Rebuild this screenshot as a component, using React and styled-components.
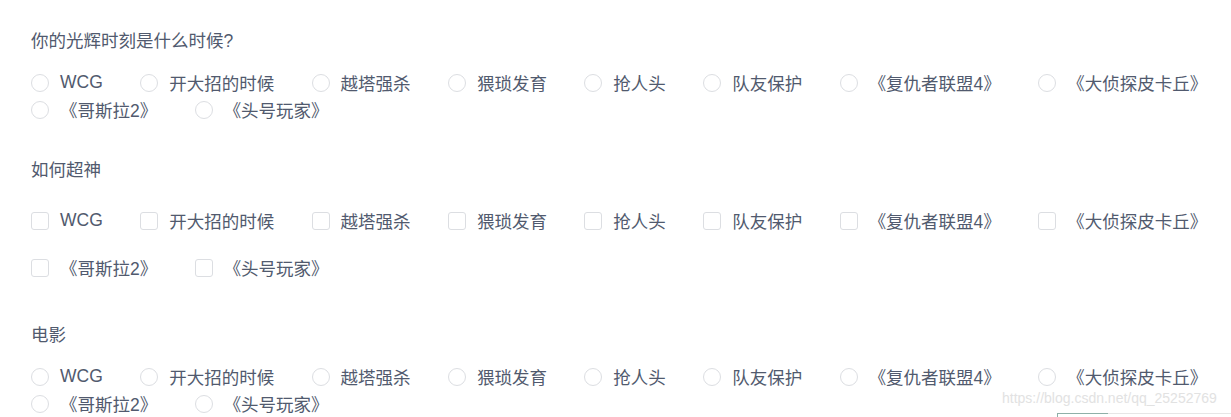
import React from 'react'
import styled, { createGlobalStyle } from 'styled-components'

const GlobalStyle = createGlobalStyle`
  html, body {
    margin: 0;
    padding: 0;
    background: #fff;
  }
  body {
    font-family: "Liberation Sans", "Noto Sans CJK SC", sans-serif;
    color: #515a6e;
  }
`

const Page = styled.div`
  position: relative;
  width: 1231px;
  height: 417px;
  overflow: hidden;
  box-sizing: border-box;
  padding: 31px 0 0 31px;
`

const Section = styled.div`
  margin-bottom: ${(p) => p.$after}px;
`

const Title = styled.div`
  font-size: 17.5px;
  line-height: 20px;
  height: 20px;
  margin-bottom: ${(p) => p.$gap}px;
  color: #515a6e;
`

const Group = styled.div`
  display: flex;
  flex-wrap: wrap;
  column-gap: 37.4px;
  row-gap: ${(p) => p.$rowGap}px;
`

const Option = styled.label`
  display: flex;
  align-items: center;
  height: 27px;
  font-size: 17.5px;
  color: #515a6e;
  white-space: nowrap;
  cursor: pointer;
`

const Mark = styled.span`
  display: inline-block;
  width: 18px;
  height: 18px;
  box-sizing: border-box;
  border: 1px solid #dcdee2;
  border-radius: ${(p) => (p.$square ? '3px' : '50%')};
  background: #fff;
  margin-right: 11px;
  flex: none;
`

const Watermark = styled.div`
  position: absolute;
  left: 1002px;
  top: 389px;
  font-size: 14px;
  line-height: 18px;
  color: #e2e2e2;
  white-space: nowrap;
`

const CornerBox = styled.div`
  position: absolute;
  left: 1057px;
  top: 413px;
  width: 174px;
  height: 10px;
  border-top: 1px solid #e6e6e6;
  &::before {
    content: '';
    position: absolute;
    left: 0;
    top: -1px;
    width: 50px;
    height: 10px;
    border-top: 1px solid #8fb0a8;
    border-left: 1px solid #8fb0a8;
  }
`

const options = [
  'WCG',
  '开大招的时候',
  '越塔强杀',
  '猥琐发育',
  '抢人头',
  '队友保护',
  '《复仇者联盟4》',
  '《大侦探皮卡丘》',
  '《哥斯拉2》',
  '《头号玩家》',
]

const ChoiceGroup = ({ square, rowGap }) => (
  <Group $rowGap={rowGap}>
    {options.map((o) => (
      <Option key={o}>
        <Mark $square={square} />
        {o}
      </Option>
    ))}
  </Group>
)

const App = () => (
  <>
    <GlobalStyle />
    <Page>
      <Section $after={37}>
        <Title $gap={18}>你的光辉时刻是什么时候?</Title>
        <ChoiceGroup rowGap={0} />
      </Section>
      <Section $after={44}>
        <Title $gap={27}>如何超神</Title>
        <ChoiceGroup square rowGap={20} />
      </Section>
      <Section $after={0}>
        <Title $gap={18}>电影</Title>
        <ChoiceGroup rowGap={0} />
      </Section>
      <Watermark>https://blog.csdn.net/qq_25252769</Watermark>
      <CornerBox />
    </Page>
  </>
)

export default App
